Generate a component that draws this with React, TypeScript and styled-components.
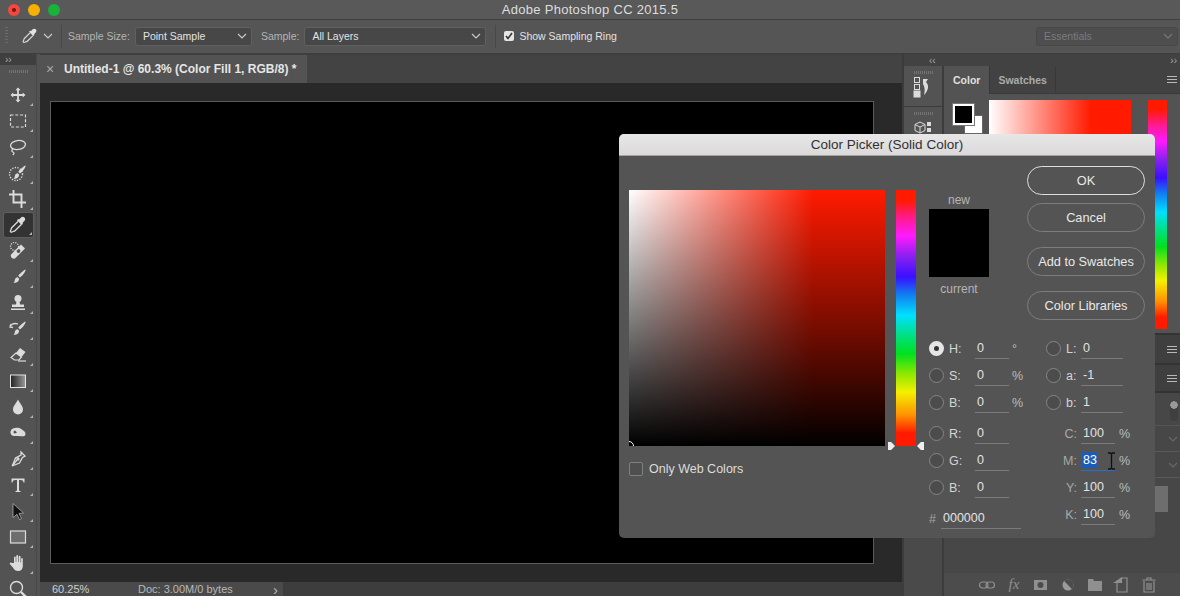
import React from "react";
import styled, { createGlobalStyle } from "styled-components";

const GlobalStyle = createGlobalStyle`
  html, body {
    margin: 0;
    padding: 0;
    background: #2a2a2a;
  }
  * {
    box-sizing: border-box;
  }
  body {
    font-family: "Liberation Sans", Arial, sans-serif;
  }
`;

const Chevron = ({ color = "#c8c8c8" }: { color?: string }) => (
  <svg width="10" height="6" viewBox="0 0 10 6">
    <path d="M1 1l4 4 4-4" fill="none" stroke={color} strokeWidth="1.2" />
  </svg>
);

const Glyph = ({ children }: { children: React.ReactNode }) => (
  <svg width="20" height="20" viewBox="0 0 20 20" fill="#dcdcdc" stroke="none">
    {children}
  </svg>
);

const Eyedropper = () => (
  <>
    <path d="M13 2.6c1-1 2.4-1 3.4 0s1 2.4 0 3.4l-2 2 .7.7-1.4 1.4-4.8-4.8 1.4-1.4.7.7z" />
    <path
      d="M10 6.5l-6.3 6.3c-.6.6-.5 1.4-.7 2-.2.5-.8.9-.7 1.5.1.5.6.9 1.2.9.6 0 1-.5 1.5-.7.6-.2 1.4-.1 2-.7l6.3-6.3"
      fill="none"
      stroke="#dcdcdc"
      strokeWidth="1.3"
    />
  </>
);

const BrushTip = () => (
  <path d="M17.5 2.5c.4.4-.7 3-2.4 5-1.2 1.4-2.4 2.5-3.2 2.9l-1.6-1.6c.5-1 1.6-2.2 3-3.4 1.9-1.6 3.8-3.3 4.2-2.9zM9.6 10.2l1.4 1.4c.3 2-1.3 4.4-5.5 4.3 1.2-.8 1-2 1.5-3.500.4-1.3 1.5-2.2 2.6-2.2z" />
);

const tools: { id: string; glyph: React.ReactNode; active?: boolean }[] = [
  {
    id: "move",
    glyph: (
      <path d="M10 2.5l2.600 2.800h-1.700v3.800h3.800V7.400l2.800 2.600-2.800 2.600v-1.700h-3.800v3.800h1.700L10 17.500l-2.600-2.800h1.700v-3.800H5.300v1.700L2.500 10l2.800-2.600v1.700h3.800V5.300H7.400z" />
    ),
  },
  {
    id: "marquee",
    glyph: (
      <rect x="2.5" y="4" width="15" height="12" fill="none" stroke="#dcdcdc" strokeWidth="1.2" strokeDasharray="3 1.8" />
    ),
  },
  {
    id: "lasso",
    glyph: (
      <g fill="none" stroke="#dcdcdc" strokeWidth="1.3">
        <ellipse cx="10" cy="8" rx="7.5" ry="4.5" transform="rotate(-8 10 8)" />
        <path d="M5 12c-1.500 1-1.500 2.500 0 3 1.500.5 1 2-.2 3" />
      </g>
    ),
  },
  {
    id: "quick-select",
    glyph: (
      <>
        <circle cx="8" cy="11" r="6.5" fill="none" stroke="#dcdcdc" strokeWidth="1.3" strokeDasharray="1.3 1.3" />
        <BrushTip />
      </>
    ),
  },
  {
    id: "crop",
    glyph: <path d="M5.5 1v12.500H18M1 5.500h12.500V19" fill="none" stroke="#dcdcdc" strokeWidth="1.9" />,
  },
  { id: "eyedropper", glyph: <Eyedropper />, active: true },
  {
    id: "heal",
    glyph: (
      <>
        <path d="M13 3.500l4 4-9.500 9.500c-1 1-2.500 1-3.500 0l-.5-.5c-1-1-1-2.500 0-3.500z" />
        <circle cx="10.5" cy="10" r="1.9" fill="#535353" />
        <circle cx="6.5" cy="5.5" r="4" fill="none" stroke="#dcdcdc" strokeWidth="1.2" strokeDasharray="1.2 1.2" />
      </>
    ),
  },
  { id: "brush", glyph: <BrushTip /> },
  {
    id: "stamp",
    glyph: (
      <>
        <circle cx="10" cy="5.5" r="3.5" />
        <path d="M8.500 8h3l.5 3.500h4V14H4v-2.500h4z" />
        <rect x="3" y="15.5" width="14" height="1.5" />
      </>
    ),
  },
  {
    id: "history",
    glyph: (
      <>
        <BrushTip />
        <path d="M2 7c2-2.500 5-3 8-2M3 5l-1 3 3 .5" fill="none" stroke="#dcdcdc" strokeWidth="1.3" />
      </>
    ),
  },
  {
    id: "eraser",
    glyph: (
      <>
        <path d="M12 3l5.500 4-4 5-5.500-4z" />
        <path d="M8 8l5.500 4-2.500 3H6.500L3 12.500z" fill="none" stroke="#dcdcdc" strokeWidth="1.2" />
        <path d="M10 16h8" stroke="#dcdcdc" strokeWidth="1.2" />
      </>
    ),
  },
  {
    id: "gradient",
    glyph: (
      <>
        <defs>
          <linearGradient id="toolGradient" x1="0" x2="1" y1="0" y2="0">
            <stop offset="0" stopColor="#222" />
            <stop offset="1" stopColor="#9a9a9a" />
          </linearGradient>
        </defs>
        <rect x="2.5" y="4" width="15" height="12.5" fill="url(#toolGradient)" stroke="#e4e4e4" />
      </>
    ),
  },
  {
    id: "blur",
    glyph: <path d="M10 2.500c1.500 3.500 5 6.300 5 10a5 5 0 0 1-10 0c0-3.700 3.500-6.500 5-10z" />,
  },
  {
    id: "smudge",
    glyph: (
      <path d="M5 5.500c3-1.500 7-1 9 1 1.500 1.200 3.500 2.300 3.500 4.500 0 1.800-1.500 2.500-3 2.300-2-.2-3.500-.6-5.500-.3-2.500.3-6 .2-6.500-3C2.300 8 3 6.500 5 5.500zm2 2a1.500 1.500 0 1 0 0 3l2-1z" />
    ),
  },
  {
    id: "pen",
    glyph: (
      <g fill="none" stroke="#dcdcdc" strokeWidth="1.3">
        <path d="M13 3l4 4-2.500 1.500-3 5.500-7.500 3 .5-.5 3-7.500 5.500-3z" />
        <path d="M4.500 16.500L9 11" />
        <circle cx="10" cy="10" r="1" />
      </g>
    ),
  },
  {
    id: "type",
    glyph: (
      <path d="M3.500 3.500h13v4h-1c-.3-1.800-1-2.500-3-2.500h-1.500v10c0 .8.400 1 1.500 1.100V17H7.500v-.9c1.100-.1 1.500-.3 1.500-1.100V5H7.500c-2 0-2.700.7-3 2.500h-1z" />
    ),
  },
  {
    id: "select",
    glyph: (
      <path d="M5 2.500l10.500 9.500-4.500.4 2.500 5.200-2 1-2.500-5.300L5 16.500z" fill="#111" stroke="#bdbdbd" strokeWidth=".7" />
    ),
  },
  {
    id: "rect",
    glyph: <rect x="2.5" y="4" width="15" height="12" fill="#6e6e6e" stroke="#dcdcdc" strokeWidth="1.2" />,
  },
  {
    id: "hand",
    glyph: (
      <path d="M6 10V4.500c0-1.200 1.700-1.200 1.700 0V9h.6V3c0-1.200 1.800-1.200 1.800 0v6h.6V3.700c0-1.200 1.800-1.200 1.800 0V9.500h.6V6c0-1.200 1.700-1.200 1.700 0v7c0 3-2 5-4.700 5-2.400 0-3.700-1-5-3.200L2 11.200c-.7-1.200.8-2.200 1.700-1.200z" />
    ),
  },
  {
    id: "zoom",
    glyph: (
      <g fill="none" stroke="#dcdcdc">
        <circle cx="8.5" cy="8.5" r="6" strokeWidth="1.4" />
        <path d="M13 13l5 5" strokeWidth="2.4" />
      </g>
    ),
  },
];

const App = () => {
  return (
    <Page>
      <GlobalStyle />
      <TitleBar>
        <Lights>
          <Light $color="#f2483f">
            <LightDot />
          </Light>
          <Light $color="#f6b100" />
          <Light $color="#17b33b" />
        </Lights>
        <AppTitle>Adobe Photoshop CC 2015.5</AppTitle>
      </TitleBar>

      <OptionsBar>
        <Grip />
        <OptionTool>
          <svg width="18" height="18" viewBox="0 0 20 20" fill="#e2e2e2">
            <Eyedropper />
          </svg>
        </OptionTool>
        <Chevron />
        <OptionDivider $left={8} $right={6} />
        <OptionLabel>Sample Size:</OptionLabel>
        <Select $width={117}>
          Point Sample
          <Chevron />
        </Select>
        <OptionLabel $offset={9}>Sample:</OptionLabel>
        <Select $width={182}>
          All Layers
          <Chevron />
        </Select>
        <OptionDivider $left={9} $right={8} />
        <Check />
        <CheckText>Show Sampling Ring</CheckText>
        <Select $width={142} $disabled $push>
          Essentials
          <Chevron color="#777" />
        </Select>
      </OptionsBar>

      <Workspace>
        <ToolsColumn>
          <CollapseBar>››</CollapseBar>
          <ToolsGrip />
          {tools.map((tool) => (
            <Tool key={tool.id} $active={tool.active}>
              <Glyph>{tool.glyph}</Glyph>
            </Tool>
          ))}
        </ToolsColumn>

        <DocColumn>
          <TabBar>
            <DocTab>
              <TabClose>×</TabClose>
              <TabTitle>Untitled-1 @ 60.3% (Color Fill 1, RGB/8) *</TabTitle>
            </DocTab>
          </TabBar>
          <Pasteboard>
            <CanvasArea />
          </Pasteboard>
          <StatusBar>
            <StatusInfo>
              <ZoomValue>60.25%</ZoomValue>
              <DocSize>Doc: 3.00M/0 bytes</DocSize>
              <StatusArrow>›</StatusArrow>
            </StatusInfo>
          </StatusBar>
        </DocColumn>

        <RightSide>
          <DockHeader>
            <DockCollapse>‹‹</DockCollapse>
            <PanelCollapse>››</PanelCollapse>
          </DockHeader>
          <RightBody>
            <Dock>
              <DockItem>
                <ToolsGrip />
                <svg width="24" height="24" viewBox="0 0 24 24" fill="none" stroke="#dcdcdc">
                  <rect x="3.5" y="1.5" width="5" height="5" />
                  <rect x="3.5" y="8.5" width="5" height="5" />
                  <rect x="3" y="15" width="6" height="6" fill="#dcdcdc" />
                  <path d="M12 3h5l-2 3c3 3 3 8 -2 13 1-4 1-8-1-11z" fill="#dcdcdc" stroke="none" />
                </svg>
              </DockItem>
              <DockItem>
                <ToolsGrip />
                <svg width="24" height="20" viewBox="0 -2 24 20" fill="#dcdcdc">
                  <path d="M9 3l5 2.500v6L9 14l-5-2.500v-6z" fill="none" stroke="#dcdcdc" />
                  <path d="M4 5.500L9 8l5-2.500M9 8v6" fill="none" stroke="#dcdcdc" />
                  <rect x="16" y="3" width="4" height="4" />
                  <rect x="16" y="9" width="4" height="4" />
                </svg>
              </DockItem>
              <DockRest />
            </Dock>

            <Panels>
              <ColorPanel>
                <PanelTabs>
                  <PanelTab $active>Color</PanelTab>
                  <PanelTab>Swatches</PanelTab>
                  <Hamburger />
                </PanelTabs>
                <ColorBody>
                  <SwatchStack>
                    <BackSwatch />
                    <FrontSwatch />
                  </SwatchStack>
                  <PanelRamp />
                  <PanelHue />
                </ColorBody>
              </ColorPanel>
              <CollapsedPanel $height={30}>
                <Hamburger />
              </CollapsedPanel>
              <CollapsedPanel $height={28}>
                <Hamburger />
              </CollapsedPanel>
              <LayersBody>
                <FilterRow>
                  <Toggle />
                </FilterRow>
                <ChevronRow>
                  <Chevron color="#686868" />
                </ChevronRow>
                <ChevronRow>
                  <Chevron color="#686868" />
                </ChevronRow>
                <LayerThumb />
              </LayersBody>
              <LayersFooter>
                <svg width="20" height="14" viewBox="0 0 20 14" fill="none" stroke="#8f8f8f" strokeWidth="1.2">
                  <rect x="2.5" y="4" width="8.500" height="6" rx="3" />
                  <rect x="9" y="4" width="8.500" height="6" rx="3" />
                </svg>
                <FxLabel>fx</FxLabel>
                <svg width="20" height="14" viewBox="0 0 20 14">
                  <rect x="3" y="2" width="13" height="10" fill="#8f8f8f" />
                  <circle cx="9.5" cy="7" r="3" fill="#4c4c4c" />
                </svg>
                <svg width="20" height="14" viewBox="0 0 20 14">
                  <circle cx="10" cy="7" r="5.5" fill="#9a9a9a" />
                  <path d="M6.100 3.100A5.500 5.500 0 0 1 13.900 10.900z" fill="#4c4c4c" />
                </svg>
                <svg width="20" height="14" viewBox="0 0 20 14" fill="#8f8f8f">
                  <path d="M3 1h5l1 2h8v10H3z" />
                </svg>
                <svg width="20" height="16" viewBox="0 0 20 16" fill="none" stroke="#8f8f8f" strokeWidth="1.2">
                  <path d="M5 5.500V15h10V1H9.500z" />
                  <path d="M3 5.500h6.500V1z" fill="#8f8f8f" />
                </svg>
                <svg width="20" height="16" viewBox="0 0 20 16" fill="none" stroke="#8f8f8f" strokeWidth="1.2">
                  <path d="M5 4v11h10V4M3.500 3h13M8 3V1h4v2M8 6v7M10 6v7M12 6v7" />
                </svg>
              </LayersFooter>
            </Panels>
          </RightBody>
        </RightSide>
      </Workspace>

      <PickerDialog>
        <DialogTitle>Color Picker (Solid Color)</DialogTitle>
        <DialogBody>
          <FieldColumn>
            <ColorField>
              <FieldMarker />
            </ColorField>
            <WebColors>
              <EmptyBox />
              <WebLabel>Only Web Colors</WebLabel>
            </WebColors>
          </FieldColumn>

          <HueStrip>
            <HueArrow $side="left" />
            <HueArrow $side="right" />
          </HueStrip>

          <Controls>
            <TopControls>
              <SwatchColumn>
                <SwatchLabel>new</SwatchLabel>
                <NewSwatch />
                <SwatchLabel>current</SwatchLabel>
              </SwatchColumn>
              <Buttons>
                <DialogButton $primary>OK</DialogButton>
                <DialogButton $gap={8}>Cancel</DialogButton>
                <DialogButton $gap={15}>Add to Swatches</DialogButton>
                <DialogButton $gap={15}>Color Libraries</DialogButton>
              </Buttons>
            </TopControls>

            <Values>
              <ValueColumn $width={117}>
                <ValueRow>
                  <Radio $checked />
                  <RadioLabel>H:</RadioLabel>
                  <ValueBox $width={34}>0</ValueBox>
                  <Unit>°</Unit>
                </ValueRow>
                <ValueRow>
                  <Radio />
                  <RadioLabel>S:</RadioLabel>
                  <ValueBox $width={34}>0</ValueBox>
                  <Unit>%</Unit>
                </ValueRow>
                <ValueRow>
                  <Radio />
                  <RadioLabel>B:</RadioLabel>
                  <ValueBox $width={34}>0</ValueBox>
                  <Unit>%</Unit>
                </ValueRow>
                <ValueRow $gap={4}>
                  <Radio />
                  <RadioLabel>R:</RadioLabel>
                  <ValueBox $width={34}>0</ValueBox>
                </ValueRow>
                <ValueRow>
                  <Radio />
                  <RadioLabel>G:</RadioLabel>
                  <ValueBox $width={34}>0</ValueBox>
                </ValueRow>
                <ValueRow>
                  <Radio />
                  <RadioLabel>B:</RadioLabel>
                  <ValueBox $width={34}>0</ValueBox>
                </ValueRow>
                <ValueRow $gap={4}>
                  <HashMark>#</HashMark>
                  <ValueBox $width={80}>000000</ValueBox>
                </ValueRow>
              </ValueColumn>

              <ValueColumn $width={99}>
                <ValueRow>
                  <Radio />
                  <LabLabel>L:</LabLabel>
                  <ValueBox $width={42}>0</ValueBox>
                </ValueRow>
                <ValueRow>
                  <Radio />
                  <LabLabel>a:</LabLabel>
                  <ValueBox $width={42}>-1</ValueBox>
                </ValueRow>
                <ValueRow>
                  <Radio />
                  <LabLabel>b:</LabLabel>
                  <ValueBox $width={42}>1</ValueBox>
                </ValueRow>
                <ValueRow $gap={4}>
                  <InkLabel>C:</InkLabel>
                  <ValueBox $width={34}>100</ValueBox>
                  <InkUnit>%</InkUnit>
                </ValueRow>
                <ValueRow>
                  <InkLabel>M:</InkLabel>
                  <ValueBox $width={34} $focused>
                    <Selected>83</Selected>
                    <TextCursor width="9" height="18" viewBox="0 0 9 18">
                      <path d="M1 1h2.500l1 1 1-1H8M1 17h2.500l1-1 1 1H8M4.500 2v14" fill="none" stroke="#111" strokeWidth="1.3" />
                    </TextCursor>
                  </ValueBox>
                  <InkUnit>%</InkUnit>
                </ValueRow>
                <ValueRow>
                  <InkLabel>Y:</InkLabel>
                  <ValueBox $width={34}>100</ValueBox>
                  <InkUnit>%</InkUnit>
                </ValueRow>
                <ValueRow>
                  <InkLabel>K:</InkLabel>
                  <ValueBox $width={34}>100</ValueBox>
                  <InkUnit>%</InkUnit>
                </ValueRow>
              </ValueColumn>
            </Values>
          </Controls>
        </DialogBody>
      </PickerDialog>
    </Page>
  );
};

export default App;

const hueStops = `#ff1a00 0%, #ff1a00 4%, #ff1a90 11%, #ff1aff 18%, #8a20f0 26%, #3a10ff 34%, #1080f0 41%, #00e0ff 49%, #00e080 57%, #00e020 64%, #90e800 72%, #f4f000 79%, #ff9000 88%, #ff1a00 95%, #ff1a00 100%`;

const Page = styled.div`
  position: relative;
  width: 1180px;
  height: 596px;
  overflow: hidden;
  display: flex;
  flex-direction: column;
  background: #535353;
`;

const TitleBar = styled.div`
  position: relative;
  height: 20px;
  display: flex;
  align-items: center;
  justify-content: center;
  background: #595959;
  border-bottom: 1px solid #3f3f3f;
`;

const Lights = styled.div`
  position: absolute;
  left: 8px;
  top: 4px;
  display: flex;
  gap: 8px;
`;

const Light = styled.div<{ $color: string }>`
  width: 12px;
  height: 12px;
  border-radius: 50%;
  background: ${(p) => p.$color};
  display: flex;
  align-items: center;
  justify-content: center;
`;

const LightDot = styled.div`
  width: 4px;
  height: 4px;
  border-radius: 50%;
  background: #7a1410;
`;

const AppTitle = styled.div`
  font-size: 13px;
  letter-spacing: 0.3px;
  color: #dedede;
`;

const OptionsBar = styled.div`
  height: 34px;
  display: flex;
  align-items: center;
  padding: 0 2px 1px 5px;
  background: #555;
  border-bottom: 1px solid #3e3e3e;
`;

const Grip = styled.div`
  width: 3px;
  height: 18px;
  background: repeating-linear-gradient(to bottom, #6c6c6c 0 1px, transparent 1px 3px);
`;

const OptionTool = styled.div`
  margin-left: 12px;
  margin-right: 3px;
  width: 20px;
  height: 20px;
  display: flex;
  align-items: center;
  justify-content: center;
`;

const OptionDivider = styled.div<{ $left: number; $right: number }>`
  width: 1px;
  height: 23px;
  background: #484848;
  margin: 0 ${(p) => p.$right}px 0 ${(p) => p.$left}px;
`;

const OptionLabel = styled.span<{ $offset?: number }>`
  font-size: 10.5px;
  color: #b4b4b4;
  margin-left: ${(p) => p.$offset ?? 0}px;
  margin-right: 5px;
`;

const Select = styled.div<{ $width: number; $disabled?: boolean; $push?: boolean }>`
  width: ${(p) => p.$width}px;
  height: 19px;
  margin-left: ${(p) => (p.$push ? "auto" : "0")};
  display: flex;
  align-items: center;
  justify-content: space-between;
  padding: 0 4px 0 7px;
  font-size: 10.5px;
  color: ${(p) => (p.$disabled ? "#7c7c7c" : "#e2e2e2")};
  background: ${(p) => (p.$disabled ? "#4e4e4e" : "#474747")};
  border: 1px solid ${(p) => (p.$disabled ? "#484848" : "#606060")};
  border-radius: 3px;
`;

const Check = () => (
  <CheckBox>
    <svg width="8" height="8" viewBox="0 0 8 8">
      <path d="M1 4l2 2.500L7 1" fill="none" stroke="#333" strokeWidth="1.6" />
    </svg>
  </CheckBox>
);

const CheckBox = styled.div`
  width: 10px;
  height: 10px;
  border-radius: 2px;
  background: #e4e4e4;
  display: flex;
  align-items: center;
  justify-content: center;
`;

const CheckText = styled.span`
  margin-left: 5px;
  font-size: 10.5px;
  color: #e2e2e2;
`;

const Workspace = styled.div`
  flex: 1;
  min-height: 0;
  display: flex;
`;

const ToolsColumn = styled.div`
  width: 37px;
  flex: none;
  display: flex;
  flex-direction: column;
  align-items: center;
  background: #535353;
  border-right: 1px solid #484848;
  overflow: hidden;
`;

const CollapseBar = styled.div`
  align-self: stretch;
  height: 11px;
  display: flex;
  align-items: center;
  padding-left: 5px;
  background: #3f3f3f;
  color: #a8a8a8;
  font-size: 10px;
`;

const ToolsGrip = styled.div`
  width: 19px;
  height: 3px;
  margin: 5px auto 9px;
  background: repeating-linear-gradient(to right, #747474 0 1px, transparent 1px 2px);
  flex: none;
`;

const Tool = styled.div<{ $active?: boolean }>`
  position: relative;
  width: 31px;
  height: 26px;
  flex: none;
  display: flex;
  align-items: center;
  justify-content: center;
  border-radius: 3px;
  background: ${(p) => (p.$active ? "#333" : "transparent")};
  border: ${(p) => (p.$active ? "1px solid #5e5e5e" : "none")};

  &::after {
    content: "";
    position: absolute;
    right: 1px;
    bottom: 2px;
    border-style: solid;
    border-width: 0 0 3px 3px;
    border-color: transparent transparent #b5b5b5 transparent;
  }
`;

const DocColumn = styled.div`
  width: 862px;
  margin-left: 3px;
  flex: none;
  display: flex;
  flex-direction: column;
  background: #2a2a2a;
`;

const TabBar = styled.div`
  height: 29px;
  display: flex;
  background: #434343;
  border-top: 1px solid #3e3e3e;
`;

const DocTab = styled.div`
  width: 267px;
  height: 28px;
  display: flex;
  align-items: center;
  background: #535353;
`;

const TabClose = styled.span`
  width: 24px;
  padding-left: 6px;
  font-size: 14px;
  color: #a8a8a8;
`;

const TabTitle = styled.span`
  font-size: 12px;
  font-weight: bold;
  color: #e6e6e6;
`;

const Pasteboard = styled.div`
  flex: 1;
  min-height: 0;
  display: flex;
  padding: 19px 29px 19px 11px;
  background: #292929;
`;

const CanvasArea = styled.div`
  flex: 1;
  background: #000;
  box-shadow: 0 0 0 1px #5a5a5a;
`;

const StatusBar = styled.div`
  height: 14px;
  background: #3d3d3d;
`;

const StatusInfo = styled.div`
  width: 243px;
  height: 14px;
  display: flex;
  align-items: center;
  padding: 0 5px 0 12px;
  background: #4a4a4a;
  font-size: 11px;
  color: #cfcfcf;
`;

const ZoomValue = styled.span`
  width: 86px;
`;

const DocSize = styled.span`
  flex: 1;
  color: #b8b8b8;
`;

const StatusArrow = styled.span`
  font-size: 15px;
  color: #b8b8b8;
`;

const RightSide = styled.div`
  flex: 1;
  min-width: 0;
  display: flex;
  flex-direction: column;
  border-left: 2px solid #3c3c3c;
`;

const DockHeader = styled.div`
  height: 12px;
  flex: none;
  display: flex;
  align-items: center;
  background: #424242;
  font-size: 10px;
  color: #a8a8a8;
`;

const DockCollapse = styled.span`
  margin-left: 25px;
`;

const PanelCollapse = styled.span`
  margin-left: auto;
  margin-right: 3px;
`;

const RightBody = styled.div`
  flex: 1;
  min-height: 0;
  display: flex;
`;

const Dock = styled.div`
  width: 40px;
  flex: none;
  display: flex;
  flex-direction: column;
  border-right: 2px solid #3c3c3c;
`;

const DockItem = styled.div`
  height: 41px;
  flex: none;
  display: flex;
  flex-direction: column;
  align-items: center;
  background: #535353;
  border-bottom: 1px solid #3c3c3c;

  & > div {
    margin-bottom: 2px;
  }
`;

const DockRest = styled.div`
  flex: 1;
  background: #4a4a4a;
`;

const Panels = styled.div`
  flex: 1;
  min-width: 0;
  display: flex;
  flex-direction: column;
`;

const ColorPanel = styled.div`
  height: 269px;
  flex: none;
  display: flex;
  flex-direction: column;
  background: #535353;
  border-bottom: 2px solid #333;
`;

const PanelTabs = styled.div`
  height: 28px;
  flex: none;
  display: flex;
  align-items: stretch;
  background: #424242;
  border-bottom: 1px solid #3a3a3a;
`;

const PanelTab = styled.div<{ $active?: boolean }>`
  display: flex;
  align-items: center;
  padding: 0 ${(p) => (p.$active ? "9px" : "8px")};
  font-size: 10.5px;
  font-weight: bold;
  color: ${(p) => (p.$active ? "#e0e0e0" : "#ababab")};
  background: ${(p) => (p.$active ? "#535353" : "transparent")};
  border-right: 1px solid #383838;
  margin-bottom: ${(p) => (p.$active ? "-1px" : "0")};
`;

const Hamburger = styled.div`
  width: 10px;
  height: 7px;
  margin: auto 3px auto auto;
  border-top: 1px solid #b8b8b8;
  border-bottom: 1px solid #b8b8b8;
  background: linear-gradient(#b8b8b8, #b8b8b8) center / 100% 1px no-repeat;
`;

const ColorBody = styled.div`
  flex: 1;
  min-height: 0;
  display: flex;
  align-items: flex-start;
  padding: 6px 13px 0 9px;
`;

const SwatchStack = styled.div`
  position: relative;
  width: 36px;
  height: 34px;
  margin-top: 4px;
  flex: none;
`;

const FrontSwatch = styled.div`
  position: absolute;
  left: 0;
  top: 0;
  width: 21px;
  height: 21px;
  background: #000;
  border: 2px solid #fff;
  box-shadow: 0 0 0 1px #777;
`;

const BackSwatch = styled.div`
  position: absolute;
  left: 11px;
  top: 11px;
  width: 19px;
  height: 19px;
  background: #fff;
  border: 1px solid #666;
`;

const PanelRamp = styled.div`
  width: 142px;
  height: 229px;
  flex: none;
  background: linear-gradient(to bottom, transparent 15%, #000), linear-gradient(to right, #fff, #ff1a00 72%);
`;

const PanelHue = styled.div`
  width: 19px;
  height: 229px;
  margin-left: 17px;
  flex: none;
  background: linear-gradient(to bottom, ${hueStops});
`;

const CollapsedPanel = styled.div<{ $height: number }>`
  height: ${(p) => p.$height}px;
  flex: none;
  display: flex;
  background: #3f3f3f;
  border-bottom: 2px solid #333;
`;

const LayersBody = styled.div`
  flex: 1;
  min-height: 0;
  display: flex;
  flex-direction: column;
  align-items: flex-end;
  background: #474747;
`;

const FilterRow = styled.div`
  align-self: stretch;
  height: 33px;
  display: flex;
  justify-content: flex-end;
  padding: 8px 2px 0 0;
  border-bottom: 1px solid #555;
`;

const Toggle = styled.div`
  width: 8px;
  height: 20px;
  border-radius: 4px;
  background: radial-gradient(circle at 4px 4px, #9a9a9a 3.5px, #3f3f3f 4px);
`;

const ChevronRow = styled.div`
  align-self: stretch;
  height: 26px;
  display: flex;
  align-items: center;
  justify-content: flex-end;
  padding-right: 2px;
  border-bottom: 1px solid #5a5a5a;
`;

const LayerThumb = styled.div`
  align-self: flex-start;
  width: 224px;
  height: 26px;
  margin-top: 8px;
  background: #6e6e6e;
`;

const LayersFooter = styled.div`
  height: 23px;
  flex: none;
  display: flex;
  align-items: center;
  gap: 7px;
  padding-left: 33px;
  background: #4c4c4c;
`;

const FxLabel = styled.span`
  width: 20px;
  text-align: center;
  font-family: "Liberation Serif", serif;
  font-style: italic;
  font-size: 15px;
  color: #8f8f8f;
`;

const PickerDialog = styled.div`
  position: absolute;
  left: 619px;
  top: 134px;
  width: 536px;
  height: 404px;
  display: flex;
  flex-direction: column;
  overflow: hidden;
  border-radius: 5px;
  background: #545454;
`;

const DialogTitle = styled.div`
  height: 22px;
  flex: none;
  display: flex;
  align-items: center;
  justify-content: center;
  font-size: 13.5px;
  color: #303030;
  background: linear-gradient(to bottom, #e8e7e7, #dbd9da);
  border-bottom: 1px solid #a5a5a5;
`;

const DialogBody = styled.div`
  flex: 1;
  min-height: 0;
  display: flex;
  align-items: flex-start;
  padding: 10px 10px 0;
`;

const FieldColumn = styled.div`
  width: 256px;
  flex: none;
  margin-top: 24px;
`;

const ColorField = styled.div`
  position: relative;
  width: 256px;
  height: 256px;
  overflow: hidden;
  background: linear-gradient(to top, #000, transparent), linear-gradient(to right, #fff, #ff1a00 72%);
`;

const FieldMarker = styled.div`
  position: absolute;
  left: -5px;
  bottom: -5px;
  width: 10px;
  height: 10px;
  border-radius: 50%;
  border: 1px solid #fff;
`;

const WebColors = styled.div`
  display: flex;
  align-items: center;
  margin-top: 16px;
`;

const EmptyBox = styled.div`
  width: 14px;
  height: 14px;
  border: 1px solid #808080;
  border-radius: 2px;
  background: #4f4f4f;
`;

const WebLabel = styled.span`
  margin-left: 6px;
  font-size: 12.5px;
  color: #dcdcdc;
`;

const HueStrip = styled.div`
  position: relative;
  width: 20px;
  height: 256px;
  margin: 24px 13px 0 11px;
  flex: none;
  background: linear-gradient(to bottom, ${hueStops});
`;

const HueArrow = styled.div<{ $side: "left" | "right" }>`
  position: absolute;
  bottom: -4px;
  ${(p) => (p.$side === "left" ? "left: -8px;" : "right: -8px;")}
  width: 7px;
  height: 8px;
  background: #eee;
  clip-path: ${(p) =>
    p.$side === "left"
      ? "polygon(0 0, 45% 0, 100% 50%, 45% 100%, 0 100%)"
      : "polygon(100% 0, 55% 0, 0 50%, 55% 100%, 100% 100%)"};
`;

const Controls = styled.div`
  width: 216px;
  flex: none;
  display: flex;
  flex-direction: column;
`;

const TopControls = styled.div`
  height: 169px;
  display: flex;
  justify-content: space-between;
`;

const SwatchColumn = styled.div`
  width: 60px;
  padding-top: 26px;
  display: flex;
  flex-direction: column;
  align-items: center;
`;

const SwatchLabel = styled.span`
  height: 17px;
  line-height: 17px;
  font-size: 12px;
  color: #b4b4b4;

  & + div + & {
    height: 24px;
    line-height: 24px;
  }
`;

const NewSwatch = styled.div`
  width: 60px;
  height: 68px;
  background: #000;
`;

const Buttons = styled.div`
  width: 118px;
  display: flex;
  flex-direction: column;
`;

const DialogButton = styled.div<{ $primary?: boolean; $gap?: number }>`
  height: 29px;
  margin-top: ${(p) => p.$gap ?? 0}px;
  display: flex;
  align-items: center;
  justify-content: center;
  border-radius: 15px;
  font-size: 12.75px;
  color: #e8e8e8;
  border: 1px solid ${(p) => (p.$primary ? "#dedede" : "#7d7d7d")};
`;

const Values = styled.div`
  display: flex;
`;

const ValueColumn = styled.div<{ $width: number }>`
  width: ${(p) => p.$width}px;
  flex: none;
  display: flex;
  flex-direction: column;
`;

const ValueRow = styled.div<{ $gap?: number }>`
  height: 27px;
  margin-top: ${(p) => p.$gap ?? 0}px;
  display: flex;
  align-items: center;
  font-size: 12.5px;
  color: #d8d8d8;
`;

const Radio = styled.div<{ $checked?: boolean }>`
  width: 15px;
  height: 15px;
  flex: none;
  border-radius: 50%;
  border: ${(p) => (p.$checked ? "5px solid #e6e6e6" : "1px solid #858585")};
  background: ${(p) => (p.$checked ? "#333" : "#4c4c4c")};
`;

const RadioLabel = styled.span`
  width: 26px;
  margin-left: 5px;
  color: #d4d4d4;
`;

const LabLabel = styled.span`
  width: 15px;
  margin-left: 5px;
  color: #d4d4d4;
`;

const InkLabel = styled.span`
  width: 31px;
  margin-right: 4px;
  text-align: right;
  color: #a8a8a8;
`;

const HashMark = styled.span`
  width: 12px;
  color: #a4a4a4;
`;

const ValueBox = styled.div<{ $width: number; $focused?: boolean }>`
  position: relative;
  width: ${(p) => p.$width}px;
  height: 20px;
  flex: none;
  display: flex;
  align-items: center;
  padding-left: 2px;
  color: #e2e2e2;
  border-bottom: 1px solid ${(p) => (p.$focused ? "#2a6ec8" : "#7b7b7b")};
`;

const Selected = styled.span`
  padding: 1px;
  margin-left: -1px;
  background: #1c5cb8;
  color: #fff;
`;

const TextCursor = styled.svg`
  position: absolute;
  right: -1px;
  top: 1px;
`;

const Unit = styled.span`
  margin-left: 3px;
  color: #bcbcbc;
`;

const InkUnit = styled.span`
  margin-left: 4px;
  color: #bcbcbc;
`;
